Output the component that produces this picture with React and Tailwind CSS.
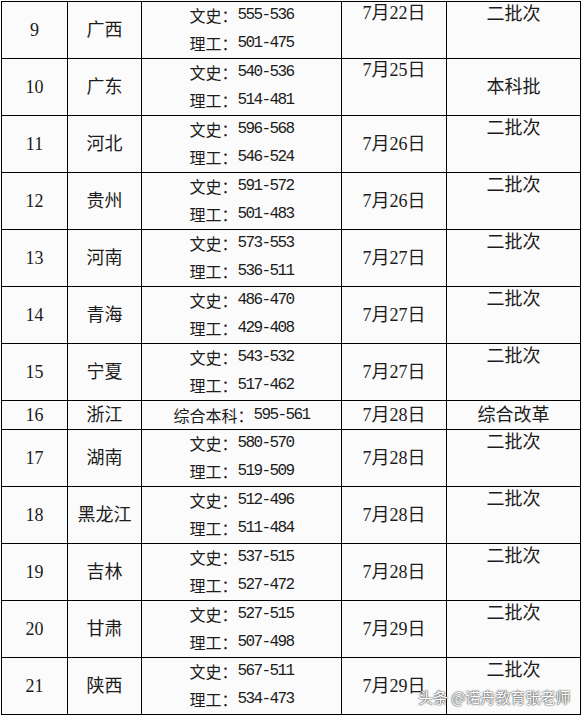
const rows = [
  { no: '9', prov: '广西', scores: ['文史：', '555-536', '理工：', '501-475'], date: '7月22日', dateTop: true, batch: '二批次' },
  { no: '10', prov: '广东', scores: ['文史：', '540-536', '理工：', '514-481'], date: '7月25日', dateTop: true, batch: '本科批', batchMid: true },
  { no: '11', prov: '河北', scores: ['文史：', '596-568', '理工：', '546-524'], date: '7月26日', batch: '二批次' },
  { no: '12', prov: '贵州', scores: ['文史：', '591-572', '理工：', '501-483'], date: '7月26日', batch: '二批次' },
  { no: '13', prov: '河南', scores: ['文史：', '573-553', '理工：', '536-511'], date: '7月27日', batch: '二批次' },
  { no: '14', prov: '青海', scores: ['文史：', '486-470', '理工：', '429-408'], date: '7月27日', batch: '二批次' },
  { no: '15', prov: '宁夏', scores: ['文史：', '543-532', '理工：', '517-462'], date: '7月27日', batch: '二批次' },
  { no: '16', prov: '浙江', single: ['综合本科：', '595-561'], date: '7月28日', batch: '综合改革' },
  { no: '17', prov: '湖南', scores: ['文史：', '580-570', '理工：', '519-509'], date: '7月28日', batch: '二批次' },
  { no: '18', prov: '黑龙江', scores: ['文史：', '512-496', '理工：', '511-484'], date: '7月28日', batch: '二批次' },
  { no: '19', prov: '吉林', scores: ['文史：', '537-515', '理工：', '527-472'], date: '7月28日', batch: '二批次' },
  { no: '20', prov: '甘肃', scores: ['文史：', '527-515', '理工：', '507-498'], date: '7月29日', batch: '二批次' },
  { no: '21', prov: '陕西', scores: ['文史：', '567-511', '理工：', '534-473'], date: '7月29日', batch: '二批次' },
];

const serif = 'font-["Liberation_Serif","Noto_Sans_CJK_SC",serif]';

function ScoreLine({ label, value, height }) {
  return (
    <div className={`flex items-center justify-center ${height}`}>
      <span className='font-["Noto_Sans_CJK_SC",sans-serif] text-[16px]'>{label}</span>
      <span className='font-["Liberation_Mono",monospace] text-[16px] tracking-[-1.6px]'>{value}</span>
    </div>
  );
}

function Row({ row }) {
  const short = !!row.single;
  const h = short ? 'h-[29px]' : 'h-[57px]';
  const cell = `border-r border-b border-black ${h} box-border`;
  return (
    <div className="flex">
      <div className={`${cell} w-[66px] flex items-center justify-center text-[18px] ${serif}`}>{row.no}</div>
      <div className={`${cell} w-[74px] flex items-center justify-center text-[18px] ${serif}`}>{row.prov}</div>
      <div className={`${cell} w-[200px] flex flex-col`}>
        {short ? (
          <ScoreLine label={row.single[0]} value={row.single[1]} height="h-[28px]" />
        ) : (
          <div className="-mt-[1px] flex flex-col">
            <ScoreLine label={row.scores[0]} value={row.scores[1]} height="h-[28px]" />
            <ScoreLine label={row.scores[2]} value={row.scores[3]} height="h-[28px]" />
          </div>
        )}
      </div>
      <div
        className={`${cell} w-[105px] flex justify-center text-[18px] ${serif} ${
          row.dateTop ? 'items-start' : 'items-center'
        }`}
      >
        <span className={row.dateTop ? 'leading-[20px] pt-[1px]' : ''}>{row.date}</span>
      </div>
      <div
        className={`${cell} w-[134px] flex justify-center text-[18px] ${serif} ${
          row.batchMid || short ? 'items-center' : 'items-start'
        }`}
      >
        <span className={row.batchMid || short ? '' : 'leading-[24px]'}>{row.batch}</span>
      </div>
    </div>
  );
}

export default function App() {
  return (
    <div className="relative w-[583px] h-[716px] overflow-hidden bg-[#fbfbfb] text-[#1c1c1c] pt-px pl-px">
      <div className="w-[580px] border-l border-t border-black box-border">
        {rows.map((r) => (
          <Row key={r.no} row={r} />
        ))}
      </div>
      <div className='absolute left-[418px] top-[687px] font-["Noto_Sans_CJK_SC",sans-serif] text-[15px] leading-[20px] text-white [text-shadow:0_0_2px_#333,0_0_1px_#333]'>
        头条 @诺舟教育张老师
      </div>
    </div>
  );
}
